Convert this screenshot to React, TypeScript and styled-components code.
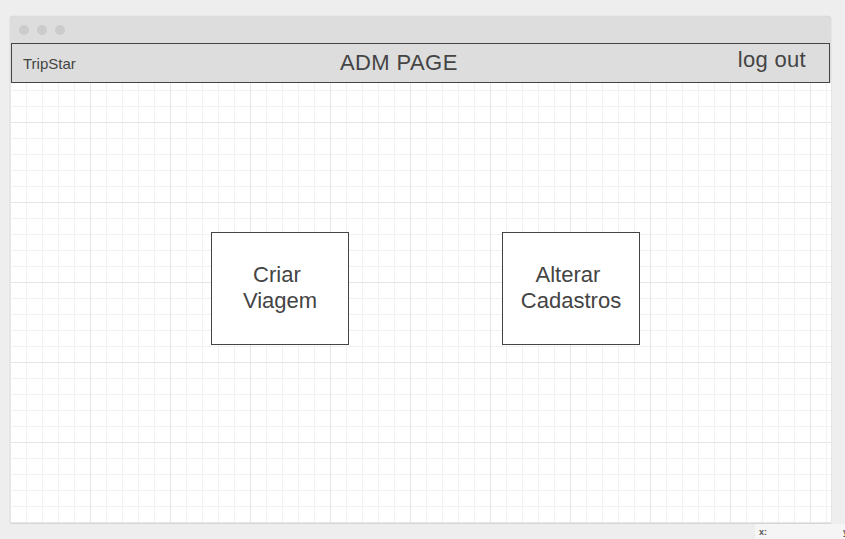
import React from "react";
import styled, { createGlobalStyle } from "styled-components";

const GlobalStyle = createGlobalStyle`
  html, body {
    margin: 0;
    padding: 0;
    background: #eeeeee;
    height: 539px;
    overflow: hidden;
  }
  body {
    font-family: "Liberation Sans", Arial, sans-serif;
    color: #444444;
  }
`;

const Page = styled.div`
  position: relative;
  width: 845px;
  height: 539px;
  padding: 16px 0 0 10px;
  box-sizing: border-box;
`;

const Window = styled.div`
  width: 821px;
  height: 507px;
  background: #dddddd;
  border-radius: 4px 4px 0 0;
  box-shadow: 0 0 1px rgba(0, 0, 0, 0.25), 0 1px 1px rgba(0, 0, 0, 0.08);
  display: flex;
  flex-direction: column;
`;

const TitleBar = styled.div`
  height: 27px;
  display: flex;
  align-items: center;
  gap: 8px;
  padding: 0 0 0 9px;
  box-sizing: border-box;
  flex-shrink: 0;
`;

const Dot = styled.span`
  width: 10px;
  height: 10px;
  border-radius: 50%;
  background: #cbcbcb;
`;

const Header = styled.header`
  margin: 0 1px;
  height: 40px;
  box-sizing: border-box;
  border: 1px solid #444444;
  background: #dddddd;
  display: grid;
  grid-template-columns: 317px 1fr auto;
  align-items: center;
  padding: 0 23px 0 11px;
  flex-shrink: 0;
`;

const Brand = styled.div`
  font-size: 15px;
`;

const Title = styled.div`
  font-size: 22px;
  letter-spacing: 0.4px;
`;

const LogOut = styled.div`
  font-size: 22px;
  letter-spacing: 0.3px;
  padding-bottom: 6px;
`;

const Canvas = styled.main`
  flex: 1;
  background-color: #ffffff;
  background-image:
    linear-gradient(to right, #e6e6e6 1px, transparent 1px),
    linear-gradient(to bottom, #e6e6e6 1px, transparent 1px),
    linear-gradient(to right, #f1f1f1 1px, transparent 1px),
    linear-gradient(to bottom, #f1f1f1 1px, transparent 1px);
  background-size: 80px 80px, 80px 80px, 16px 16px, 16px 16px;
  background-position: 0px 39px, 0px 39px, 0px 7px, 0px 7px;
  display: flex;
  align-items: flex-start;
  gap: 153px;
  padding: 149px 0 0 201px;
  box-sizing: border-box;
`;

const ActionBox = styled.button`
  width: 138px;
  height: 113px;
  box-sizing: border-box;
  border: 1px solid #444444;
  background: #ffffff;
  padding: 0 0 2px;
  margin: 0;
  display: flex;
  flex-direction: column;
  align-items: center;
  justify-content: center;
  font-family: "Liberation Sans", Arial, sans-serif;
  font-size: 22px;
  line-height: 26px;
  color: #444444;
  cursor: pointer;
`;

const Line = styled.span`
  white-space: pre;
`;

const Coords = styled.div`
  position: absolute;
  left: 755px;
  top: 524px;
  width: 120px;
  height: 15px;
  background: #f5f5f5;
  display: flex;
  align-items: center;
  font-family: "Liberation Sans", Arial, sans-serif;
  font-size: 9px;
  font-weight: bold;
  color: #555555;
`;

const CoordLabel = styled.span<{ $w: number }>`
  width: ${(p) => p.$w}px;
  padding-left: 4px;
  box-sizing: border-box;
`;

export default function App() {
  return (
    <>
      <GlobalStyle />
      <Page>
        <Window>
          <TitleBar>
            <Dot />
            <Dot />
            <Dot />
          </TitleBar>
          <Header>
            <Brand>TripStar</Brand>
            <Title>ADM PAGE</Title>
            <LogOut>log out</LogOut>
          </Header>
          <Canvas>
            <ActionBox>
              <Line>{"Criar "}</Line>
              <Line>Viagem</Line>
            </ActionBox>
            <ActionBox>
              <Line>{"Alterar "}</Line>
              <Line>Cadastros</Line>
            </ActionBox>
          </Canvas>
        </Window>
        <Coords>
          <CoordLabel $w={84}>x:</CoordLabel>
          <CoordLabel $w={30}>y:</CoordLabel>
        </Coords>
      </Page>
    </>
  );
}
